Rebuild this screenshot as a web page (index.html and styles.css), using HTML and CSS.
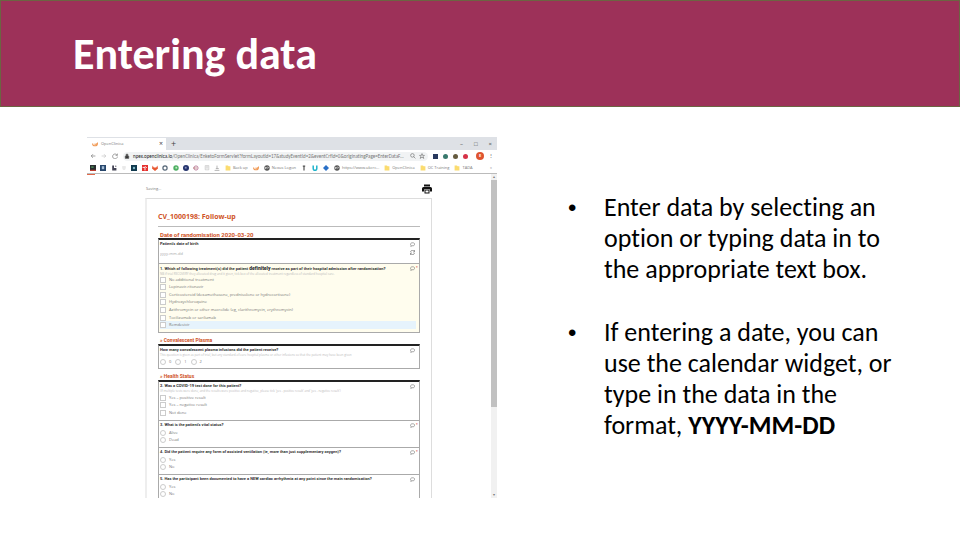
FILE: index.html
```
<!DOCTYPE html>
<html lang="en">
    <head>
        <meta charset="utf-8">
        <title>Entering data</title>
        <link rel="stylesheet" href="styles.css">
    </head>
    <body>
        <svg class="sprite" aria-hidden="true">
            <symbol id="comment" viewBox="0 0 10 10"><path d="M1 4.500C1 0.500 9.500 0.500 9.500 4.500C9.500 7 6.500 8 4 7.400L1.500 9L2 6.800Q1 6 1 4.500Z" fill="none" stroke="#777" stroke-width="1.300"/></symbol>
            <symbol id="folder" viewBox="0 0 10 10"><path d="M1 1h4l1 1h3v7H1z" fill="#fbdc6f"/></symbol>
            <symbol id="logo" viewBox="0 0 10 10"><path d="M1 4Q1 8 5 8Q9 8 9 4Q7 6 4 5" fill="none" stroke="#f0964f" stroke-width="1.800"/></symbol>
            <symbol id="globe" viewBox="0 0 10 10"><circle cx="5" cy="5" r="4.500" fill="#555"/><path d="M2 3l3 1-1 2-2 1zM6 2l2 2-2 3z" fill="#ddd"/></symbol>
        </svg>
        <header class="banner">
            <h1>Entering data</h1>
        </header>
        <main class="slide">
            <div class="browser">
                <div class="tabs">
                    <div class="tab">
                        <svg><use href="#logo"/></svg>
                        <span>OpenClinica</span>
                        <button class="close" aria-label="Close tab">×</button>
                    </div>
                    <button class="plus" aria-label="New tab">+</button>
                    <div class="window-buttons">
                        <button aria-label="Minimise">–</button>
                        <button aria-label="Maximise">□</button>
                        <button aria-label="Close">×</button>
                    </div>
                </div>
                <div class="toolbar">
                    <button aria-label="Back"><svg viewBox="0 0 10 10"><path d="M9 5H2M5 2L2 5l3 3"/></svg></button>
                    <button aria-label="Forward"><svg class="faded" viewBox="0 0 10 10"><path d="M1 5h7M5 2l3 3-3 3"/></svg></button>
                    <button aria-label="Reload"><svg viewBox="0 0 10 10"><path d="M8 3A4 4 0 1 0 9 6M9 1v3H6"/></svg></button>
                    <div class="address">
                        <svg class="lock" viewBox="0 0 10 10"><path d="M2 5h6v4H2zM3.500 5V2h3v3"/></svg>
                        <span class="url"><b>npex.openclinica.io</b>/OpenClinica/EnketoFormServlet?formLayoutId=17&amp;studyEventId=2&amp;eventCrfId=0&amp;originatingPage=EnterDataF...</span>
                        <svg viewBox="0 0 10 10"><circle cx="4" cy="4" r="3"/><path d="M6 6l3 3"/></svg>
                        <svg viewBox="0 0 10 10"><path d="M5 1l1 3h3L7 6l1 3-3-2-3 2 1-3-2-2h3z"/></svg>
                    </div>
                    <div class="extensions">
                        <i class="navy"></i>
                        <i class="round mixed"></i>
                        <i class="round brown"></i>
                        <i class="round red"></i>
                        <b class="avatar">E</b>
                        <button aria-label="Menu">⋮</button>
                    </div>
                </div>
                <nav class="bookmarks">
                    <div class="pins">
                        <svg viewBox="0 0 10 10"><path d="M0 0h10v10H0z" fill="#292d30"/><path d="M0 8h10v2H0z" fill="#bd3e31"/><path d="M2 2h4v3H2z" fill="#477b50"/></svg>
                        <svg viewBox="0 0 10 10"><path d="M0 0h10v10H0z" fill="#27466b"/><path d="M3 2h4v5H3z" fill="#a5bdd6"/></svg>
                        <svg viewBox="0 0 10 10"><path d="M2 1h3v4h4v4H2z" fill="#445"/><circle cx="8" cy="2" r="1" fill="#445"/></svg>
                        <svg viewBox="0 0 10 10"><path d="M2 3h6M2 5h6M3 7h4" stroke="#ccc"/></svg>
                        <svg viewBox="0 0 10 10"><path d="M0 0h10v10H0z" fill="#10394e"/><circle cx="5" cy="5" r="2" fill="#80b8c4"/></svg>
                        <svg viewBox="0 0 10 10"><path d="M0 0h10v10H0z" fill="#e5302d"/><path d="M1 4h4v5M5 2l3 3" stroke="#fff" stroke-width="1.500" fill="none"/></svg>
                        <svg viewBox="0 0 10 10"><path d="M1 1l2 3h4l2-3 1 5-5 4-5-4z" fill="#e75731"/></svg>
                        <svg viewBox="0 0 10 10"><circle cx="5" cy="5" r="3.500" fill="none" stroke="#567" stroke-width="2"/></svg>
                        <svg viewBox="0 0 10 10"><circle cx="5" cy="5" r="4.500" fill="#4cae61"/><path d="M4 3h3v3H4z" fill="#c4edc7"/></svg>
                        <svg viewBox="0 0 10 10"><circle cx="5" cy="5" r="5" fill="#24336c"/><path d="M3 3h3v3H3z" fill="#8993c1"/></svg>
                        <svg viewBox="0 0 10 10"><circle cx="5" cy="5" r="3.500" fill="none" stroke="#b87896" stroke-width="1.500"/><path d="M0 5h7" stroke="#a55"/></svg>
                        <svg viewBox="0 0 10 10"><path d="M2 1h6v7H2zM3 3h4M3 5h4" fill="none" stroke="#bbb"/></svg>
                        <svg viewBox="0 0 10 10"><path d="M1 9h8M5 1v5M3 6h5" fill="none" stroke="#888"/></svg>
                    </div>
                    <a href="#"><svg><use href="#folder"/></svg>Back up</a>
                    <a href="#"><svg><use href="#logo"/></svg></a>
                    <a href="#"><svg><use href="#globe"/></svg>Nexus Logon</a>
                    <a href="#"><svg viewBox="0 0 10 10"><path d="M5 1v8M3 2h4" stroke="#555" stroke-width="2"/></svg></a>
                    <a href="#"><svg viewBox="0 0 10 10"><path d="M2 1v5q0 3 3 3t3-3V1" fill="none" stroke="#20b4cc" stroke-width="2.500"/></svg></a>
                    <a href="#"><svg viewBox="0 0 10 10"><path d="M5 0l5 5-5 5-5-5z" fill="#2a70c7"/></svg></a>
                    <a href="#"><svg><use href="#globe"/></svg>https://www.ukcrc...</a>
                    <a href="#"><svg><use href="#folder"/></svg>OpenClinica</a>
                    <a href="#"><svg><use href="#folder"/></svg>OC Training</a>
                    <a href="#"><svg><use href="#folder"/></svg>TADA</a>
                    <span class="more">»</span>
                </nav>
                <div class="viewport">
                    <div class="page">
                        <div class="page-top">
                            <span>Saving...</span>
                            <svg class="printer" viewBox="0 0 20 20"><path d="M4 1h12v4H4zM3 6h14q3 0 3 3v6h-4v-4H4v4H0V9q0-3 3-3z" fill="#111"/><path d="M5 12h10v7H5z" fill="#111"/><path d="M7 13h6v4H7z" fill="#fff"/></svg>
                        </div>
                        <form class="paper">
                            <h2>CV_1000198: Follow-up</h2>
                            <h3 class="first">Date of randomisation 2020-03-20</h3>
                            <section class="group">
                                <div class="question dob">
                                    <label class="title" for="dob">Patient's date of birth</label>
                                    <input id="dob" type="text" placeholder="yyyy-mm-dd">
                                    <svg class="note"><use href="#comment"/></svg>
                                    <svg class="reset" viewBox="0 0 10 10"><path d="M1 4a4 4 0 0 1 7-2M9 0v4H6M9 6a4 4 0 0 1-7 2M1 10V6h3"/></svg>
                                </div>
                                <fieldset class="question active">
                                    <legend class="title">1. Which of following treatment(s) did the patient <strong>definitely</strong> receive as part of their hospital admission after randomisation?</legend>
                                    <p class="hint">NB if trial RECOVERY they allocated drug and it given, tick box of the allocated treatment regardless of standard hospital care.</p>
                                    <div class="options seven">
                                        <label><input type="checkbox">No additional treatment</label>
                                        <label><input type="checkbox">Lopinavir-ritonavir</label>
                                        <label><input type="checkbox">Corticosteroid (dexamethasone, prednisolone or hydrocortisone)</label>
                                        <label><input type="checkbox">Hydroxychloroquine</label>
                                        <label><input type="checkbox">Azithromycin or other macrolide (eg, clarithromycin, erythromycin)</label>
                                        <label><input type="checkbox">Tocilizumab or sarilumab</label>
                                        <label class="hover"><input type="checkbox">Remdesivir</label>
                                    </div>
                                    <svg class="note"><use href="#comment"/></svg>
                                    <span class="star">*</span>
                                </fieldset>
                            </section>
                            <h3>» Convalescent Plasma</h3>
                            <section class="group">
                                <fieldset class="question plasma">
                                    <legend class="title">How many convalescent plasma infusions did the patient receive?</legend>
                                    <p class="hint">This question is given as part of trial, but any standard-of-care hospital plasma or other infusions so that the patient may have been given</p>
                                    <div class="inline">
                                        <label><input type="radio" name="plasma">0</label>
                                        <label><input type="radio" name="plasma">1</label>
                                        <label><input type="radio" name="plasma">2</label>
                                    </div>
                                    <svg class="note"><use href="#comment"/></svg>
                                </fieldset>
                            </section>
                            <h3>» Health Status</h3>
                            <section class="group status">
                                <fieldset class="question covid">
                                    <legend class="title">2. Was a COVID-19 test done for this patient?</legend>
                                    <p class="hint">(If multiple tests were done, and the results were positive and negative, please tick 'yes - positive result' and 'yes - negative result')</p>
                                    <div class="options three">
                                        <label><input type="checkbox">Yes – positive result</label>
                                        <label><input type="checkbox">Yes – negative result</label>
                                        <label><input type="checkbox">Not done</label>
                                    </div>
                                    <svg class="note"><use href="#comment"/></svg>
                                </fieldset>
                                <fieldset class="question short">
                                    <legend class="title">3. What is the patient's vital status?</legend>
                                    <div class="options two">
                                        <label><input type="radio" name="vital">Alive</label>
                                        <label><input type="radio" name="vital">Dead</label>
                                    </div>
                                    <svg class="note"><use href="#comment"/></svg>
                                    <span class="star">*</span>
                                </fieldset>
                                <fieldset class="question short">
                                    <legend class="title">4. Did the patient require any form of assisted ventilation (ie, more than just supplementary oxygen)?</legend>
                                    <div class="options two">
                                        <label><input type="radio" name="vent">Yes</label>
                                        <label><input type="radio" name="vent">No</label>
                                    </div>
                                    <svg class="note"><use href="#comment"/></svg>
                                    <span class="star">*</span>
                                </fieldset>
                                <fieldset class="question short">
                                    <legend class="title">5. Has the participant been documented to have a NEW cardiac arrhythmia at any point since the main randomisation?</legend>
                                    <div class="options two">
                                        <label><input type="radio" name="heart">Yes</label>
                                        <label><input type="radio" name="heart">No</label>
                                    </div>
                                    <svg class="note"><use href="#comment"/></svg>
                                </fieldset>
                            </section>
                        </form>
                    </div>
                    <div class="scrollbar"><span>▴</span><div class="thumb"></div><span>▾</span></div>
                </div>
            </div>
            <ul class="notes">
                <li>Enter data by selecting an option or typing data in to the appropriate text box.</li>
                <li>If entering a date, you can use the calendar widget, or type in the data in the format, <b>YYYY-MM-DD</b></li>
            </ul>
        </main>
    </body>
</html>
```
FILE: styles.css
```
*{
    box-sizing: border-box;
}
body{
    margin: 0;
    background-color: white;
    color: black;
    font-family: Carlito, Lato, sans-serif;
    font-variant-ligatures: none;
}
.sprite{
    position: absolute;
    width: 0;
    height: 0;
}
.banner{
    display: flex;
    align-items: center;
    height: 107px;
    padding: 0 72px;
    background-color: #9d3159;
    border: 1px solid #6c6442;
}
.banner h1{
    margin: 0;
    color: white;
    font-size: 44px;
    line-height: 48px;
}
.slide{
    display: grid;
    grid-template-columns: 410fr 398fr;
    column-gap: 65px;
    align-items: start;
    padding: 30px 0 0 87px;
}

/* bullet list */
.notes{
    margin: 55px 60px 0 0;
    padding: 0 0 0 42px;
    list-style: none;
    font-size: 26px;
    line-height: 31px;
}
.notes li{
    position: relative;
}
.notes li::before{
    content: "•";
    position: absolute;
    left: -36px;
    font-family: "Liberation Sans", sans-serif;
    font-size: 24px;
}
.notes li + li{
    margin-top: 32px;
}

/* browser window */
.browser{
    height: 361px;
    overflow: hidden;
    font-family: "Open Sans", sans-serif;
    font-size: 4px;
    line-height: 6px;
    color: #777;
}
.browser button{
    padding: 0;
    border: 0;
    background: none;
    color: #444;
    font: inherit;
}
.browser svg{
    display: block;
    flex: none;
    width: 6px;
    height: 6px;
}
.tabs{
    display: flex;
    align-items: center;
    height: 13px;
    background-color: #dee1e6;
}
.tab{
    display: flex;
    align-items: center;
    gap: 3px;
    width: 79px;
    height: 12px;
    margin-top: 1px;
    padding: 0 3px 0 5px;
    background-color: white;
    font-size: 4px;
}
.tabs .close{
    margin-left: auto;
    font-size: 7px;
}
.tabs .plus{
    margin-left: 5px;
    font-size: 9px;
}
.window-buttons{
    display: flex;
    gap: 11px;
    margin-left: auto;
    padding-right: 5px;
}
.window-buttons button{
    font-size: 6px;
}
.toolbar{
    display: flex;
    align-items: center;
    gap: 5px;
    height: 12px;
    padding: 0 4px 0 3px;
}
.toolbar svg{
    fill: none;
    stroke: #666;
    stroke-width: 1;
}
.toolbar .faded{
    stroke: #bbb;
}
.toolbar .lock{
    fill: #333;
}
.address{
    display: flex;
    align-items: center;
    gap: 3px;
    flex: 1;
    min-width: 0;
    height: 9px;
    padding: 0 3px 0 1px;
    border-radius: 5px;
    background-color: #f1f3f4;
}
.url{
    flex: 1;
    white-space: nowrap;
    font-family: Carlito, Lato, sans-serif;
    font-size: 5px;
}
.url b{
    color: #222;
    font-weight: normal;
}
.extensions{
    display: flex;
    align-items: center;
    gap: 5px;
}
.extensions i{
    width: 5px;
    height: 5px;
    background-color: #28385e;
}
.extensions .round{
    border-radius: 50%;
}
.extensions .mixed{
    background-color: #39796d;
}
.extensions .brown{
    background-color: #665b3f;
}
.extensions .red{
    background-color: #d63348;
}
.extensions .avatar{
    width: 8px;
    height: 8px;
    margin-left: 3px;
    border-radius: 50%;
    background-color: #df5430;
    color: white;
    line-height: 8px;
    text-align: center;
}
.bookmarks{
    display: flex;
    align-items: center;
    gap: 5px;
    height: 11px;
    padding: 0 5px 0 3px;
}
.bookmarks a{
    display: flex;
    align-items: center;
    gap: 2px;
    color: #777;
    text-decoration: none;
    white-space: nowrap;
}
.pins{
    display: flex;
    justify-content: space-between;
    width: 130px;
}
.more{
    margin-left: auto;
}
.viewport{
    display: flex;
    height: 325px;
    border-top: 1px solid #bbb;
}
.page{
    flex: 1;
    padding: 0 59px 0 58px;
}
.page::before{
    content: "";
    display: block;
    width: 8px;
    height: 1px;
    margin-left: -58px;
    background-color: #e0694a;
}
.page-top{
    display: flex;
    align-items: center;
    justify-content: space-between;
    height: 23px;
    padding: 5px 0 0 1px;
}
.browser .printer{
    width: 10px;
    height: 10px;
}
.scrollbar{
    display: flex;
    flex-direction: column;
    justify-content: space-between;
    width: 6px;
    background-color: #f1f1f1;
    text-align: center;
}
.thumb{
    flex: 1;
    margin-bottom: 85px;
    background-color: #c1c1c1;
}

/* form */
.paper{
    height: 310px;
    padding: 12px 11px 0;
    border: 1px solid #ddd;
    border-left: 2px solid #eee;
}
.paper h2{
    height: 16px;
    margin: 0;
    border-bottom: 1px solid #bbb;
    color: #cf5327;
    font-size: 7px;
    font-weight: 700;
    line-height: 12px;
}
.paper h3{
    margin: 4px 0 0 2px;
    color: #cf5327;
    font-family: Roboto, sans-serif;
    font-size: 5px;
    line-height: 7px;
}
.paper h3.first{
    font-size: 6px;
}
.group{
    border: 1px solid #aaa;
    border-top: 2px solid #222;
}
.question{
    position: relative;
    min-width: 0;
    margin: 0;
    padding: 1px 3px 0 1px;
    border: 0;
    color: #777;
}
.question + .question{
    border-top: 1px solid #aaa;
}
.title{
    float: left;
    width: 100%;
    padding: 0;
    color: #333;
    font-family: Roboto, sans-serif;
    font-weight: bold;
    line-height: 6px;
    white-space: nowrap;
}
.title strong{
    font-size: 5px;
}
.hint{
    clear: both;
    margin: 0;
    color: #bbb;
    font-size: 3px;
    line-height: 4px;
    white-space: nowrap;
}
.dob{
    height: 23px;
}
.dob input{
    display: block;
    width: 60px;
    padding: 4px 0 0;
    border: 0;
    background: none;
    font: inherit;
}
.dob input::placeholder{
    color: #aaa;
}
.active{
    height: 69px;
    background-color: #fffdee;
}
.plasma{
    height: 22px;
}
.covid{
    height: 38px;
}
.short{
    height: 27px;
}
.status{
    border-bottom: 0;
}
.options{
    display: grid;
    grid-auto-rows: 1fr;
    clear: both;
}
.seven{
    height: 53px;
}
.three{
    height: 23px;
    margin-top: 1px;
}
.two{
    height: 16px;
    padding-top: 1px;
}
.options label{
    display: flex;
    align-items: center;
    gap: 3px;
}
.hover{
    background-color: #e6f3fc;
}
.inline{
    display: flex;
    gap: 4px;
    padding-top: 2px;
}
.inline label{
    display: flex;
    align-items: center;
    gap: 3px;
}
.question input[type="checkbox"],
.question input[type="radio"]{
    appearance: none;
    width: 6px;
    height: 6px;
    margin: 0;
    border: 1px solid #ccc;
    background-color: white;
}
.question input[type="radio"]{
    border-radius: 50%;
}
.browser .note{
    position: absolute;
    top: 2px;
    right: 4px;
    width: 5px;
    height: 5px;
}
.star{
    position: absolute;
    top: 1px;
    right: 1px;
    color: #c33;
}
.browser .reset{
    position: absolute;
    top: 10px;
    right: 4px;
    width: 5px;
    height: 5px;
    fill: none;
    stroke: #444;
    stroke-width: 1;
}
```
